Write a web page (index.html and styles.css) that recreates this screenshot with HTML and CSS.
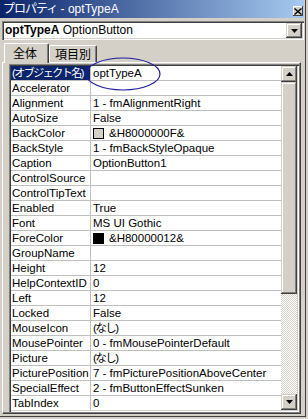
FILE: index.html
```html
<!DOCTYPE html>
<html lang="ja">

<head>
  <meta charset="utf-8">
  <title>プロパティ - optTypeA</title>
  <link rel="stylesheet" href="styles.css">
</head>

<body>
  <div class="window">
    <div class="titlebar">
      <span class="title"><span class="jp-title">プロパティ</span> - optTypeA</span>
      <span class="close-btn">
        <svg width="8" height="7" viewBox="0 0 8 7"><path d="M0.5 0.5L7.5 6.5M7.5 0.5L0.5 6.5" stroke="#000" stroke-width="1.4" /></svg>
      </span>
    </div>

    <div class="combo">
      <span class="combo-text"><b>optTypeA</b> OptionButton</span>
      <span class="raised-btn drop-btn">
        <svg width="7" height="4" viewBox="0 0 7 4"><path d="M0 0h7L3.5 4z" /></svg>
      </span>
    </div>

    <div class="tabs">
      <span class="tab active">全体</span>
      <span class="tab">項目別</span>
    </div>

    <div class="panel">
      <div class="grid">
        <div class="props">
          <div class="row selected"><span class="name jp-tight">(オブジェクト名)</span><span class="value">optTypeA</span></div>
          <div class="row"><span class="name">Accelerator</span><span class="value"></span></div>
          <div class="row"><span class="name">Alignment</span><span class="value">1 - fmAlignmentRight</span></div>
          <div class="row"><span class="name">AutoSize</span><span class="value">False</span></div>
          <div class="row"><span class="name">BackColor</span><span class="value"><i class="swatch face"></i>&amp;H8000000F&amp;</span></div>
          <div class="row"><span class="name">BackStyle</span><span class="value">1 - fmBackStyleOpaque</span></div>
          <div class="row"><span class="name">Caption</span><span class="value">OptionButton1</span></div>
          <div class="row"><span class="name">ControlSource</span><span class="value"></span></div>
          <div class="row"><span class="name">ControlTipText</span><span class="value"></span></div>
          <div class="row"><span class="name">Enabled</span><span class="value">True</span></div>
          <div class="row"><span class="name">Font</span><span class="value">MS UI Gothic</span></div>
          <div class="row"><span class="name">ForeColor</span><span class="value"><i class="swatch dark"></i>&amp;H80000012&amp;</span></div>
          <div class="row"><span class="name">GroupName</span><span class="value"></span></div>
          <div class="row"><span class="name">Height</span><span class="value">12</span></div>
          <div class="row"><span class="name">HelpContextID</span><span class="value">0</span></div>
          <div class="row"><span class="name">Left</span><span class="value">12</span></div>
          <div class="row"><span class="name">Locked</span><span class="value">False</span></div>
          <div class="row"><span class="name">MouseIcon</span><span class="value jp-tight">(なし)</span></div>
          <div class="row"><span class="name">MousePointer</span><span class="value">0 - fmMousePointerDefault</span></div>
          <div class="row"><span class="name">Picture</span><span class="value jp-tight">(なし)</span></div>
          <div class="row"><span class="name">PicturePosition</span><span class="value">7 - fmPicturePositionAboveCenter</span></div>
          <div class="row"><span class="name">SpecialEffect</span><span class="value">2 - fmButtonEffectSunken</span></div>
          <div class="row"><span class="name">TabIndex</span><span class="value">0</span></div>
        </div>

        <div class="vscroll">
          <span class="raised-btn sb-btn">
            <svg width="7" height="4" viewBox="0 0 7 4"><path d="M0 4h7L3.5 0z" /></svg>
          </span>
          <span class="sb-thumb"></span>
          <span class="sb-track"></span>
          <span class="raised-btn sb-btn">
            <svg width="7" height="4" viewBox="0 0 7 4"><path d="M0 0h7L3.5 4z" /></svg>
          </span>
        </div>
      </div>
    </div>

    <!-- hand-drawn mark round the object name -->
    <svg class="callout" width="80" height="38" viewBox="0 0 80 38">
      <ellipse cx="39" cy="18" rx="37" ry="16" fill="none" stroke="#1e1e9e" stroke-width="1.2" />
    </svg>
  </div>
</body>

</html>
```

FILE: styles.css
```css
html,
body {
  margin: 0;
  height: 100%;
}

body {
  background: #d4d0c8;
  font-family: "Liberation Sans", "Noto Sans CJK JP", sans-serif;
  font-size: 12px;
  color: #000;
}

:root {
  --face: #d4d0c8;
  --hilite: #fff;
  --shadow: #808080;
  --dark: #404040;
  --grid-line: #c0c0c0;
  --select: #0a246a;
}

.window {
  position: relative;
  width: 308px;
  height: 419px;
  box-sizing: border-box;
  padding: 0 4px 5px 0;
  display: flex;
  flex-direction: column;
  overflow: hidden;
  background: var(--face);
  box-shadow:
    inset -2px -2px var(--face),
    inset -3px -3px var(--dark);
}

.jp-tight {
  letter-spacing: -1.5px;
}

.jp-title {
  letter-spacing: -1px;
}

/* title bar */
.titlebar {
  height: 18px;
  flex: none;
  display: flex;
  align-items: flex-end;
  justify-content: space-between;
  padding: 0 1px 2px 3px;
  box-sizing: border-box;
  background: linear-gradient(to right, #0a246a, #a6caf0);
  color: #fff;
}

.title {
  font-size: 12px;
  line-height: 14px;
  white-space: nowrap;
}

.close-btn {
  width: 10px;
  height: 10px;
  display: flex;
  align-items: center;
  justify-content: center;
  background: var(--face);
  box-shadow:
    inset -1px -1px var(--dark),
    inset 1px 1px var(--hilite);
}

/* object combo */
.combo {
  height: 19px;
  flex: none;
  margin: 3px 0 0 2px;
  box-sizing: border-box;
  padding: 2px 2px 2px 3px;
  display: flex;
  align-items: center;
  background: #fff;
  box-shadow:
    inset 1px 1px var(--shadow),
    inset 2px 2px var(--dark),
    inset -1px -1px var(--hilite),
    inset -2px -2px var(--face);
}

.combo-text {
  flex: 1;
  line-height: 15px;
  white-space: nowrap;
}

.raised-btn {
  display: flex;
  align-items: center;
  justify-content: center;
  background: var(--face);
  box-shadow:
    inset -1px -1px var(--dark),
    inset 1px 1px var(--face),
    inset -2px -2px var(--shadow),
    inset 2px 2px var(--hilite);
}

.drop-btn {
  width: 16px;
  height: 15px;
}

/* tabs */
.tabs {
  height: 23px;
  flex: none;
  margin-bottom: -1px;
  padding-left: 4px;
  display: flex;
  align-items: flex-end;
  z-index: 1;
}

.tab {
  height: 17px;
  width: 48px;
  margin-bottom: 1px;
  box-sizing: border-box;
  padding-top: 2px;
  text-align: center;
  line-height: 14px;
  background: var(--face);
  border-top: 1px solid var(--hilite);
  border-left: 1px solid var(--hilite);
  border-right: 1px solid var(--dark);
  border-radius: 2px 2px 0 0;
  box-shadow: inset -1px 0 var(--shadow);
}

.tab.active {
  height: 20px;
  width: 45px;
  margin-bottom: 0;
  padding: 3px 3px 0 0;
}

/* property page */
.panel {
  flex: none;
  height: 352px;
  margin: 0 3px 0 2px;
  box-sizing: border-box;
  padding: 1px 1px 1px 6px;
  border-top: 1px solid var(--hilite);
  border-left: 1px solid var(--hilite);
  border-right: 1px solid var(--dark);
  border-bottom: 1px solid var(--dark);
  box-shadow:
    inset -1px -1px var(--shadow);
}

.grid {
  height: 348px;
  box-sizing: border-box;
  padding: 2px;
  display: flex;
  background: #fff;
  box-shadow:
    inset 1px 1px var(--shadow),
    inset 2px 2px var(--dark),
    inset -1px -1px var(--hilite),
    inset -2px -2px var(--face);
}

.props {
  flex: 1;
  overflow: hidden;
  font-size: 11.5px;
}

.row {
  height: 14px;
  display: flex;
  border-bottom: 1px solid var(--grid-line);
  line-height: 14px;
  white-space: nowrap;
}

.name {
  width: 80px;
  flex: none;
  box-sizing: border-box;
  padding-left: 1px;
  border-right: 1px solid var(--grid-line);
  overflow: hidden;
}

.value {
  flex: 1;
  padding-left: 2px;
  display: flex;
  align-items: center;
  overflow: hidden;
}

.selected .name {
  background: var(--select);
  color: #fff;
  font-size: 11px;
}

.swatch {
  width: 9px;
  height: 9px;
  margin-right: 5px;
  border: 1px solid #000;
  flex: none;
}

.swatch.face {
  background: var(--face);
}

.swatch.dark {
  background: #000;
}

/* scroll bar */
.vscroll {
  width: 16px;
  flex: none;
  display: flex;
  flex-direction: column;
}

.sb-btn {
  height: 16px;
  flex: none;
}

.sb-thumb {
  height: 212px;
  flex: none;
  background: var(--face);
  box-shadow:
    inset -1px -1px var(--dark),
    inset 1px 1px var(--face),
    inset -2px -2px var(--shadow),
    inset 2px 2px var(--hilite);
}

.sb-track {
  flex: 1;
  background: repeating-conic-gradient(var(--face) 0 25%, #fff 0 50%) 0 0 / 2px 2px;
}

/* annotation ellipse */
.callout {
  position: absolute;
  left: 84px;
  top: 56px;
  pointer-events: none;
}
```
